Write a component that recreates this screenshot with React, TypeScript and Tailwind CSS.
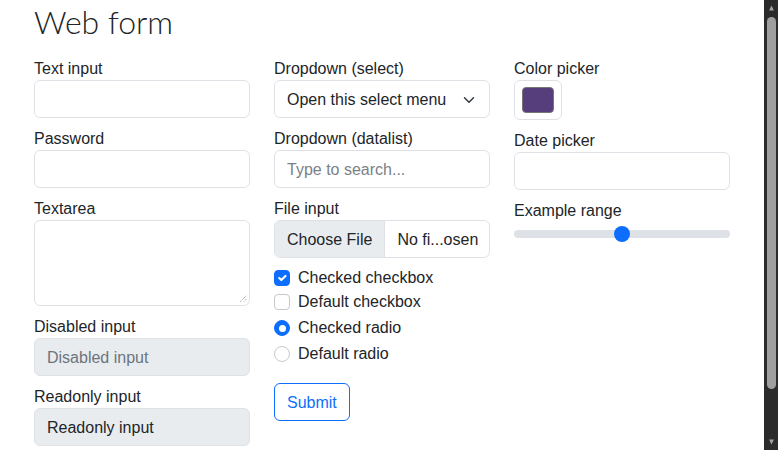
import type { ReactNode } from "react";

const font = { fontFamily: '"Liberation Sans", Arial, sans-serif' };

function Field({ label, children }: { label: string; children: ReactNode }) {
    return (
        <div className="mb-2">
            <div className="h-6 pt-[1px] text-base leading-[23px] text-[#212529]">{label}</div>
            {children}
        </div>
    );
}

function Box({ children, className = "" }: { children?: ReactNode; className?: string }) {
    return (
        <div className={`flex h-[38px] w-full items-center whitespace-nowrap rounded-[6px] border border-[#dee2e6] px-3 pt-[1px] text-base ${className}`}>
            {children}
        </div>
    );
}

function Check({ checked, radio, label, className = "" }: { checked?: boolean; radio?: boolean; label: string; className?: string }) {
    const shape = radio ? "rounded-full" : "rounded-[4px]";
    return (
        <div className={`flex items-center gap-2 text-base text-[#212529] ${className}`}>
            <span
                className={`flex h-4 w-4 shrink-0 items-center justify-center border ${shape} ${
                    checked ? "border-[#0d6efd] bg-[#0d6efd]" : "border-[#c6c9cc] bg-white"
                }`}
            >
                {checked && !radio && (
                    <svg viewBox="0 0 20 20" className="h-3.5 w-3.5">
                        <path d="m6 10 3 3 6-6" fill="none" stroke="#fff" strokeWidth="3" strokeLinecap="round" strokeLinejoin="round" />
                    </svg>
                )}
                {checked && radio && <span className="h-[7px] w-[7px] rounded-full bg-white" />}
            </span>
            <span>{label}</span>
        </div>
    );
}

export default function App() {
    return (
        <div className="flex h-[450px] w-[778px] overflow-hidden bg-white text-[#212529]" style={font}>
            <div className="flex-1 px-[34px]">
                <h1 className="pt-[2px] text-[32px] font-light leading-[40px] mb-[14px]" style={{ fontFamily: 'Lato, "Liberation Sans", sans-serif' }}>
                    Web form
                </h1>

                <div className="grid grid-cols-[216px_216px_216px] gap-x-6">
                    {/* column 1 */}
                    <div>
                        <Field label="Text input">
                            <Box />
                        </Field>
                        <Field label="Password">
                            <Box />
                        </Field>
                        <Field label="Textarea">
                            <div className="relative h-[86px] w-full rounded-[6px] border border-[#dee2e6]">
                                <svg viewBox="0 0 10 10" className="absolute bottom-[2px] right-[2px] h-[9px] w-[9px]">
                                    <path d="M9 2 2 9M9 6 6 9" stroke="#777" strokeWidth="1" strokeDasharray="1 1" />
                                </svg>
                            </div>
                        </Field>
                        <Field label="Disabled input">
                            <Box className="bg-[#e9ecef] text-[#6c757d]">Disabled input</Box>
                        </Field>
                        <Field label="Readonly input">
                            <Box className="bg-[#e9ecef]">Readonly input</Box>
                        </Field>
                    </div>

                    {/* column 2 */}
                    <div>
                        <Field label="Dropdown (select)">
                            <Box className="justify-between pr-3">
                                <span>Open this select menu</span>
                                <svg viewBox="0 0 16 16" className="h-3 w-4">
                                    <path d="m2 5 6 6 6-6" fill="none" stroke="#343a40" strokeWidth="2" strokeLinecap="round" strokeLinejoin="round" />
                                </svg>
                            </Box>
                        </Field>
                        <Field label="Dropdown (datalist)">
                            <Box className="text-[#7b8187]">Type to search...</Box>
                        </Field>
                        <Field label="File input">
                            <div className="flex h-[38px] w-full items-stretch overflow-hidden whitespace-nowrap rounded-[6px] border border-[#dee2e6] pt-[1px] text-base">
                                <span className="-mt-[1px] flex items-center border-r border-[#dee2e6] bg-[#e9ecef] px-3 pt-[1px]">Choose File</span>
                                <span className="flex items-center px-3">No fi...osen</span>
                            </div>
                        </Field>
                        <Check checked label="Checked checkbox" className="mt-[1px] h-6" />
                        <Check label="Default checkbox" className="h-6" />
                        <Check checked radio label="Checked radio" className="mt-[2px] h-6" />
                        <Check radio label="Default radio" className="mt-[2px] h-6" />
                        <button className="mt-[17px] h-[38px] rounded-[6px] border border-[#0d6efd] px-3 pt-[1px] text-base text-[#0d6efd]">
                            Submit
                        </button>
                    </div>

                    {/* column 3 */}
                    <div>
                        <Field label="Color picker">
                            <div className="mb-[2px] flex h-[40px] w-[48px] items-center justify-center rounded-[6px] border border-[#dee2e6]">
                                <span className="h-[26px] w-[32px] rounded-[4px] border border-[#777] bg-[#563d7c]" />
                            </div>
                        </Field>
                        <Field label="Date picker">
                            <Box />
                        </Field>
                        <Field label="Example range">
                            <div className="flex h-6 items-center">
                                <div className="flex h-2 w-full items-center rounded-full bg-[#dee2e6] pl-[100px]">
                                    <span className="h-4 w-4 rounded-full bg-[#0d6efd]" />
                                </div>
                            </div>
                        </Field>
                    </div>
                </div>
            </div>

            {/* scrollbar */}
            <div className="flex w-[15px] flex-col items-center bg-[#2b2b2b]">
                <svg viewBox="0 0 10 10" className="mt-[5px] h-[6px] w-[9px]">
                    <path d="M5 1 9 9H1Z" fill="#a3a3a3" />
                </svg>
                <div className="mt-[6px] h-[372px] w-[9px] rounded-full bg-[#9f9f9f]" />
                <div className="flex-1" />
                <svg viewBox="0 0 10 10" className="mb-[5px] h-[6px] w-[9px]">
                    <path d="M1 1h8L5 9Z" fill="#a3a3a3" />
                </svg>
            </div>
        </div>
    );
}
